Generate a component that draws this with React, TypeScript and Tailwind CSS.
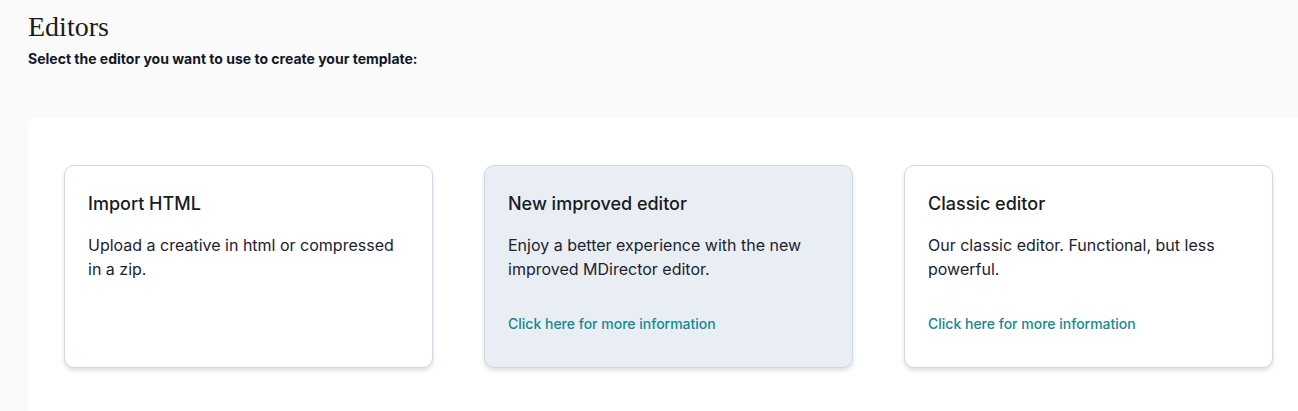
const cards = [
  {
    title: "Import HTML",
    text: "Upload a creative in html or compressed in a zip.",
    link: false,
    active: false,
  },
  {
    title: "New improved editor",
    text: "Enjoy a better experience with the new improved MDirector editor.",
    link: true,
    active: true,
  },
  {
    title: "Classic editor",
    text: "Our classic editor. Functional, but less powerful.",
    link: true,
    active: false,
  },
];

export default function App() {
  return (
    <div className="w-[1298px] h-[411px] overflow-hidden bg-[#fafafa]">
      <div className="px-7 pt-[11px]">
        <h1 className="text-[28px] leading-[32px] text-[#1b1b1b] font-['Liberation_Serif',serif]">
          Editors
        </h1>
        <p className="mt-[8px] text-[14px] leading-[16px] font-bold text-[#111827] font-['Inter',sans-serif]">
          Select the editor you want to use to create your template:
        </p>
      </div>

      <div className="ml-7 mt-[50px] w-[1300px] h-[320px] bg-white rounded-tl-lg pl-9 pt-12 font-['Inter',sans-serif]">
        <div className="flex gap-[51px]">
          {cards.map((card) => (
            <div
              key={card.title}
              className={`w-[369px] h-[203px] rounded-[10px] border border-[#cfd9e6] shadow-[0_3px_4px_rgba(0,0,0,0.12)] px-[23px] pt-[27px] ${
                card.active ? "bg-[#e9eef5]" : "bg-white"
              }`}
            >
              <h3 className="text-[18px] leading-[22px] font-medium text-[#161b26]">
                {card.title}
              </h3>
              <p className="mt-[18px] text-[16px] leading-[24px] text-[#1c2230] pr-2">
                {card.text}
              </p>
              {card.link && (
                <a className="block mt-[34px] text-[14px] leading-[18px] font-medium text-[#138a91]">
                  Click here for more information
                </a>
              )}
            </div>
          ))}
        </div>
      </div>
    </div>
  );
}
